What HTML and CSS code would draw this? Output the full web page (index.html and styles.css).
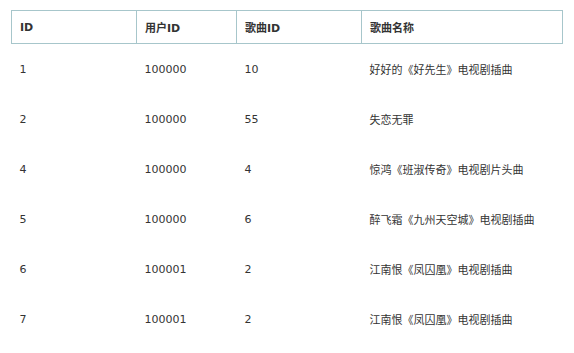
FILE: index.html
```html
<!DOCTYPE html>
<html lang="zh">
<head>
<meta charset="utf-8">
<link rel="stylesheet" href="styles.css">
</head>
<body>
<table class="songs">
  <colgroup>
    <col class="c1"><col class="c2"><col class="c3"><col class="c4">
  </colgroup>
  <thead>
    <tr><th>ID</th><th>用户ID</th><th>歌曲ID</th><th>歌曲名称</th></tr>
  </thead>
  <tbody>
    <tr><td>1</td><td>100000</td><td>10</td><td>好好的《好先生》电视剧插曲</td></tr>
    <tr><td>2</td><td>100000</td><td>55</td><td>失恋无罪</td></tr>
    <tr><td>4</td><td>100000</td><td>4</td><td>惊鸿《班淑传奇》电视剧片头曲</td></tr>
    <tr><td>5</td><td>100000</td><td>6</td><td>醉飞霜《九州天空城》电视剧插曲</td></tr>
    <tr><td>6</td><td>100001</td><td>2</td><td>江南恨《凤囚凰》电视剧插曲</td></tr>
    <tr><td>7</td><td>100001</td><td>2</td><td>江南恨《凤囚凰》电视剧插曲</td></tr>
  </tbody>
</table>
</body>
</html>
```

FILE: styles.css
```css
html, body {
  margin: 0;
  padding: 0;
  background: #ffffff;
}
body {
  padding: 10px 12px 0 11px;
  font-family: "DejaVu Sans", "Noto Sans CJK SC", sans-serif;
  font-size: 11px;
  color: #333333;
}
.songs {
  border-collapse: collapse;
  width: 551px;
  table-layout: fixed;
}
.c1 { width: 125px; }
.c2 { width: 100px; }
.c3 { width: 125px; }
.c4 { width: 201px; }
.songs th {
  border: 1px solid #a7c6cb;
  height: 32px;
  padding: 0 8px;
  text-align: left;
  font-weight: bold;
  vertical-align: middle;
}
.songs td {
  height: 50px;
  padding: 0 8px;
  vertical-align: middle;
}
```
